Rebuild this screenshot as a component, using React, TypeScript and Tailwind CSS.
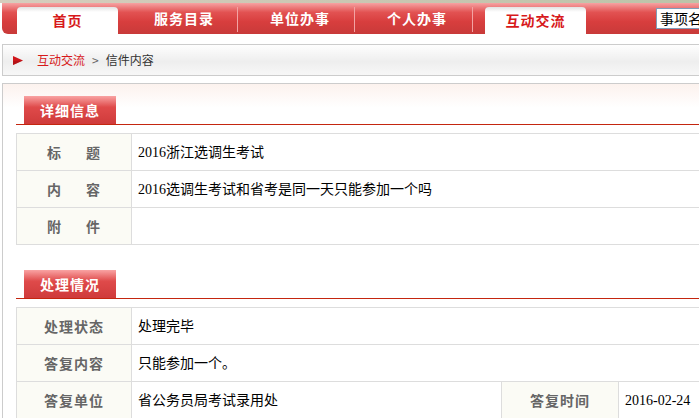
import React from 'react'

const cjk = "font-['Noto_Sans_CJK_SC',sans-serif]"
const serif = "font-['Liberation_Serif','Noto_Sans_CJK_SC',serif]"

function NavItem({ label, width, pad }: { label: string; width: string; pad: string }) {
  return (
    <div className={`${width} ${pad} flex h-full items-center justify-center text-[14px] font-bold tracking-[1px] text-white`}>
      {label}
    </div>
  )
}

function ActiveTab({ label }: { label: string }) {
  return (
    <div className="relative flex h-[27px] w-[101px] items-center justify-center rounded-t-[4px] bg-[linear-gradient(#e2e2e2,#ffffff_5px)] text-[14px] font-bold tracking-[1px] text-[#d7191b]">
      {label}
    </div>
  )
}

function Sep() {
  return <div className="mt-[4px] h-[25px] w-px self-start bg-[#f3a3a3]" />
}

function SectionHead({ title }: { title: string }) {
  return (
    <div>
      <div className="ml-[8px] flex h-[28px] w-[92px] items-center justify-center bg-[linear-gradient(#f9a3a3,#df4a4a_40%,#cf3b3b)] text-[14px] font-bold tracking-[1px] text-white">
        {title}
      </div>
      <div className="h-px bg-[#c4260f]" />
    </div>
  )
}

function Label({ children, w = 'w-[115px]' }: { children: React.ReactNode; w?: string }) {
  return (
    <div className={`${w} flex shrink-0 items-center justify-center border-r border-[#dddddd] bg-[#fbfbf5] text-[14px] font-bold tracking-[1px] text-[#666666]`}>
      {children}
    </div>
  )
}

function Spaced({ a, b }: { a: string; b: string }) {
  return (
    <span className="flex gap-[24px]">
      <span>{a}</span>
      <span>{b}</span>
    </span>
  )
}

function Value({ children, w = 'flex-1' }: { children?: React.ReactNode; w?: string }) {
  return (
    <div className={`${w} flex items-center border-r border-[#dddddd] pl-[6px] text-[14px] text-black ${serif}`}>
      {children}
    </div>
  )
}

function Row({ children }: { children: React.ReactNode }) {
  return <div className="flex h-[37px] border-b border-[#dddddd]">{children}</div>
}

export default function App() {
  return (
    <div className={`h-[418px] w-[699px] overflow-hidden bg-white ${cjk}`}>
      <div className="w-[800px]">
        <div className="h-[3px] bg-[linear-gradient(90deg,#d6cdbd,#c8c6b1_50%,#b7c3a6)]" />

        {/* main navigation */}
        <div className="pl-[2px]">
          <div className="flex h-[31px] items-end rounded-bl-[6px] bg-[linear-gradient(#f6a2a2,#e25252_30%,#d83e3e_60%,#c83a39)]">
            <div className="ml-[15px]" />
            <ActiveTab label="首页" />
            <NavItem label="服务目录" width="w-[119px]" pad="pl-[13px]" />
            <Sep />
            <NavItem label="单位办事" width="w-[116px]" pad="pl-[8px]" />
            <Sep />
            <NavItem label="个人办事" width="w-[117px]" pad="pl-[7px]" />
            <Sep />
            <div className="ml-[12px]" />
            <ActiveTab label="互动交流" />
            <div className="mb-[5px] ml-[70px] flex h-[21px] w-[120px] items-center self-start mt-[5px] border border-[#7f9db9] bg-white pl-[3px] text-[14px] text-black">
              事项名称
            </div>
          </div>
        </div>

        <div className="pl-[2px] pt-[10px]">
          {/* breadcrumb */}
          <div className="flex h-[32px] items-center border border-r-0 border-[#cccccc] bg-[linear-gradient(#fefefe,#eeeeee_55%,#f7f7f7)] text-[12px]">
            <svg className="ml-[10px]" width="10" height="9" viewBox="0 0 10 9">
              <polygon points="0,0 10,4.5 0,9" fill="#d0161b" />
              <polygon points="0,5 10,4.5 0,9" fill="#9a1014" opacity="0.5" />
            </svg>
            <span className="ml-[14px] text-[#d7191b]">互动交流</span>
            <span className="mx-[7px] text-[#666666]">&gt;</span>
            <span className="text-[#333333]">信件内容</span>
          </div>

          {/* content box */}
          <div className="mt-[7px] border-l border-t border-[#cccccc] bg-[linear-gradient(#fcf2ee,#ffffff_24px)] pb-[20px] pl-[13px] pt-[12px]">
            <SectionHead title="详细信息" />
            <div className="mt-[8px] border-l border-t border-[#dddddd]">
              <Row>
                <Label><Spaced a="标" b="题" /></Label>
                <Value>2016浙江选调生考试</Value>
              </Row>
              <Row>
                <Label><Spaced a="内" b="容" /></Label>
                <Value>2016选调生考试和省考是同一天只能参加一个吗</Value>
              </Row>
              <Row>
                <Label><Spaced a="附" b="件" /></Label>
                <Value />
              </Row>
            </div>

            <div className="mt-[25px]">
              <SectionHead title="处理情况" />
            </div>
            <div className="mt-[8px] border-l border-t border-[#dddddd]">
              <Row>
                <Label>处理状态</Label>
                <Value>处理完毕</Value>
              </Row>
              <Row>
                <Label>答复内容</Label>
                <Value>只能参加一个。</Value>
              </Row>
              <Row>
                <Label>答复单位</Label>
                <Value w="w-[370px]">省公务员局考试录用处</Value>
                <Label w="w-[117px]">答复时间</Label>
                <Value>2016-02-24</Value>
              </Row>
            </div>
          </div>
        </div>
      </div>
    </div>
  )
}
